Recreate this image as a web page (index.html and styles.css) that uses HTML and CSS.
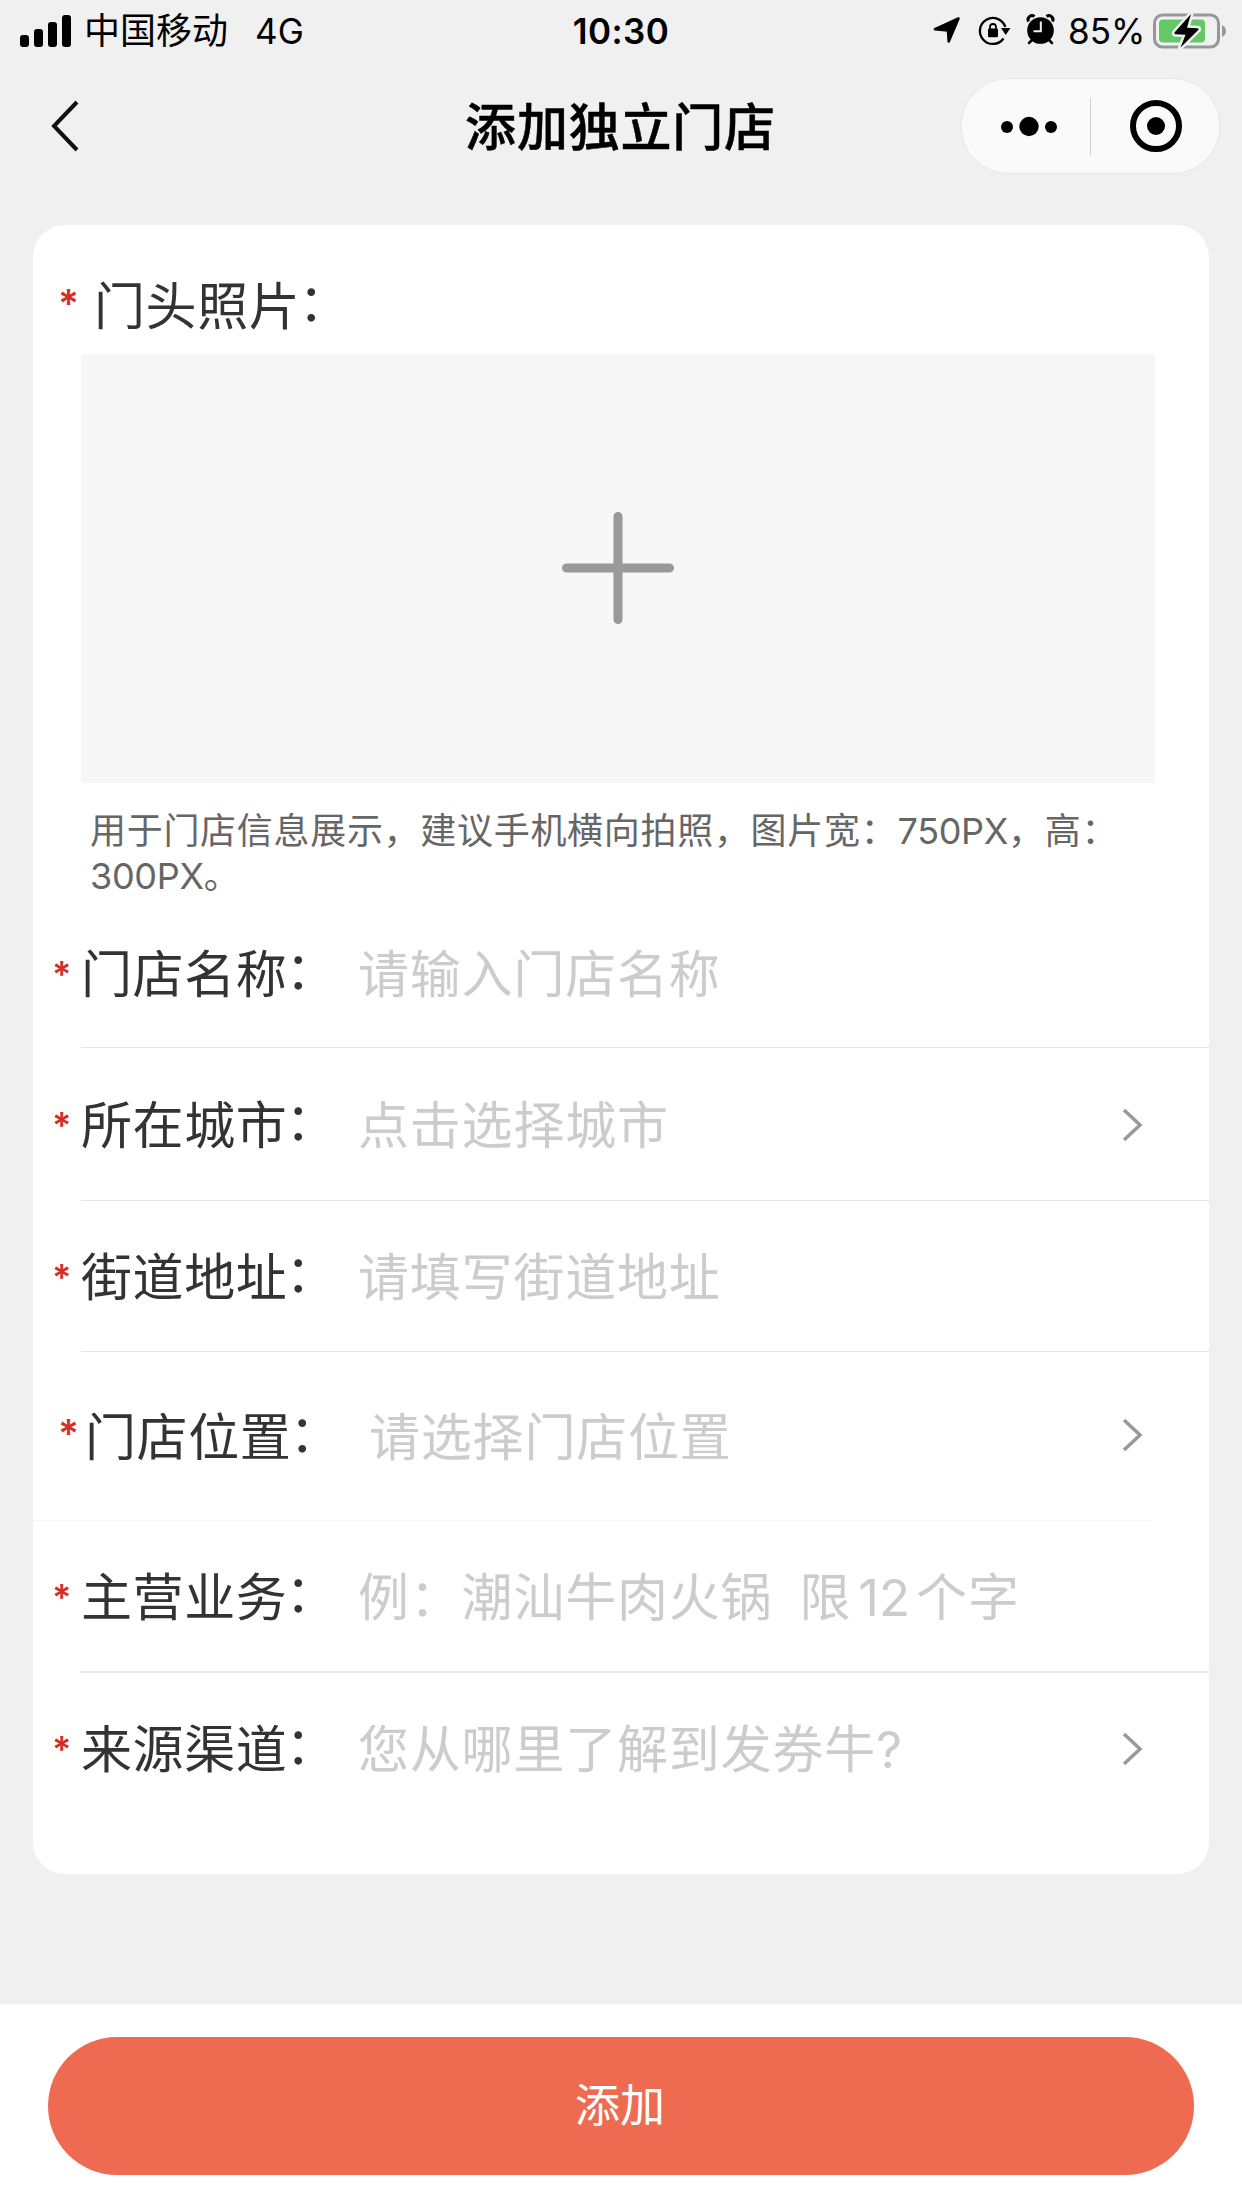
FILE: index.html
```html
<!DOCTYPE html>
<html lang="zh-CN">
<head>
<meta charset="utf-8">
<title>添加独立门店</title>
<link rel="stylesheet" href="styles.css">
</head>
<body>
<div class="page">
  <div class="status">
    <div class="status-left">
      <svg class="signal" width="52" height="32" viewBox="0 0 52 32"><rect x="0" y="20" width="9" height="12" rx="3"/><rect x="14" y="14" width="9" height="18" rx="3"/><rect x="28" y="7" width="9" height="25" rx="3"/><rect x="42" y="0" width="9" height="32" rx="3"/></svg>
      <span class="carrier">中国移动</span>
      <span class="network">4G</span>
    </div>
    <div class="clock">10:30</div>
    <div class="status-right">
      <svg width="128" height="40" viewBox="930 12 128 40">
        <path d="M958.5 19.5L935 30.2L948 31.5L948.7 42.500Z" stroke="#000" stroke-width="2.600" stroke-linejoin="round"/>
        <path d="M1005.300 28A13 13 0 1 0 1003.500 39.500" fill="none" stroke="#000" stroke-width="2.300"/>
        <path d="M1001 29H1010.500L1005.700 36Z"/>
        <rect x="988" y="29.500" width="10" height="8.800" rx="1.200"/>
        <path d="M990 30V28a3 3 0 0 1 6 0V30" fill="none" stroke="#000" stroke-width="1.800"/>
        <circle cx="1040.500" cy="31.500" r="13.300"/>
        <path d="M1028.500 22.500A4 4 0 0 1 1034.500 17.500M1046.500 17.500A4 4 0 0 1 1052.500 22.500" fill="none" stroke="#000" stroke-width="3"/>
        <path d="M1032 41L1029 44M1049 41L1052 44" stroke="#000" stroke-width="2.500" stroke-linecap="round"/>
        <path d="M1040.800 22.500V32.200H1033.500" fill="none" stroke="#f0f0f0" stroke-width="2"/>
      </svg>
      <span class="percent">85%</span>
      <svg width="74" height="40" viewBox="1152 10 74 40">
        <rect x="1154.500" y="14" width="64" height="32" rx="8" fill="none" stroke="#97979a" stroke-width="3"/>
        <rect x="1159" y="18.500" width="46" height="23" rx="4" fill="#63c967"/>
        <path d="M1222 24Q1226 26 1226 30T1222 36Z" fill="#97979a"/>
        <path d="M1191 13L1174.500 31.500Q1173.800 33 1175.500 33.300L1185.500 33.800L1180.500 46.500L1198.500 28.700Q1199 27.500 1197.500 27.200L1187 26.700Z" stroke="#f0f0f0" stroke-width="5" stroke-linejoin="round" paint-order="stroke"/>
      </svg>
    </div>
  </div>

  <div class="navbar">
    <svg class="back" width="32" height="56" viewBox="0 0 32 56"><path d="M29 4L6 28L29 52" fill="none" stroke="#111" stroke-width="4"/></svg>
    <h1 class="title">添加独立门店</h1>
    <svg class="capsule" width="262" height="98" viewBox="960 77 262 98">
      <rect x="961" y="78.500" width="259" height="95" rx="47.500" fill="#fafafa" stroke="#e6e6e6"/>
      <circle cx="1007" cy="127" r="6"/><circle cx="1029" cy="126.500" r="9.700"/><circle cx="1051" cy="127" r="6"/>
      <path d="M1090.500 98V155" stroke="#cfcfcf"/>
      <circle cx="1156" cy="126" r="23" fill="none" stroke="#000" stroke-width="6"/><circle cx="1156" cy="126" r="9"/>
    </svg>
  </div>

  <div class="card">
    <div class="photo-head"><span class="star star-large">*</span><span class="label">门头照片<i>：</i></span></div>
    <div class="upload">
      <svg width="114" height="114" viewBox="0 0 114 114"><path d="M57 5.500V108.500M5.500 57H108.500" stroke="#999" stroke-width="9" stroke-linecap="round"/></svg>
    </div>
    <p class="hint">用于门店信息展示，建议手机横向拍照，图片宽：<span class="size">750PX</span>，高：<span class="size">300PX</span>。</p>

    <div class="row row-name"><span class="star">*</span><span class="label">门店名称<i>：</i></span><span class="value">请输入门店名称</span></div>
    <div class="row row-city"><span class="star">*</span><span class="label">所在城市<i>：</i></span><span class="value">点击选择城市</span><svg class="chevron" viewBox="0 0 22 34"><path d="M2 2L18 17L2 32"/></svg></div>
    <div class="row row-street"><span class="star">*</span><span class="label">街道地址<i>：</i></span><span class="value">请填写街道地址</span></div>
    <div class="row row-place"><span class="star star-large">*</span><span class="label">门店位置<i>：</i></span><span class="value">请选择门店位置</span><svg class="chevron" viewBox="0 0 22 34"><path d="M2 2L18 17L2 32"/></svg></div>
    <div class="row row-business"><span class="star">*</span><span class="label">主营业务<i>：</i></span><span class="value">例：潮汕牛肉火锅<span class="limit">限</span><span class="count">12</span>个字</span></div>
    <div class="row row-source"><span class="star">*</span><span class="label">来源渠道<i>：</i></span><span class="value">您从哪里了解到发券牛?</span><svg class="chevron" viewBox="0 0 22 34"><path d="M2 2L18 17L2 32"/></svg></div>
  </div>

  <div class="footer"><button class="submit">添加</button></div>
</div>
</body>
</html>
```
FILE: styles.css
```css
* { box-sizing: border-box; }
body {
  margin: 0;
  background: #f0f0f0;
  color: #000;
  font-family: Inter, "Noto Sans CJK SC", sans-serif;
}
svg { display: block; flex: none; }
.page {
  width: 1242px;
  height: 2208px;
  display: flex;
  flex-direction: column;
  overflow: hidden;
}
.status {
  height: 61px;
  display: grid;
  grid-template-columns: 1fr 120px 1fr;
  align-items: center;
  padding: 0 16px 0 20px;
  font-size: 35px;
  line-height: 60px;
  white-space: nowrap;
}
.status-left, .status-right { display: flex; align-items: center; }
.status-right { justify-content: flex-end; }
.carrier { margin-left: 12px; padding-top: 1px; font-size: 36px; }
.network { margin-left: 27px; }
.clock {
  padding: 0 4px 0 0;
  text-align: center;
  font-weight: 600;
  letter-spacing: 0.4px;
}
.percent { width: 83px; margin-left: 10px; margin-right: 1px; }
.navbar {
  height: 129px;
  display: grid;
  grid-template-columns: 262px 1fr 262px;
  align-items: center;
  padding: 0 20px 0 48px;
}
.title {
  margin: 0;
  padding: 4px 29px 0 0;
  text-align: center;
  font-size: 51px;
  line-height: 72px;
  font-weight: 500;
  letter-spacing: 0.8px;
  -webkit-text-stroke: 0.5px #000;
}
.card {
  width: 1176px;
  height: 1649px;
  margin: 35px 33px 0;
  flex: none;
  border-radius: 32px;
  background: #fff;
  display: flex;
  flex-direction: column;
}
.photo-head {
  height: 129px;
  display: flex;
  align-items: center;
  padding: 32px 0 0 25px;
}
.label {
  padding-top: 2px;
  color: #333;
  font-size: 51px;
  line-height: 72px;
  letter-spacing: 0.6px;
  white-space: nowrap;
}
.label i {
  position: relative;
  top: -4px;
  left: -2px;
  font-style: normal;
}
.star {
  width: 29px;
  flex: none;
  color: #d32f2a;
  font-size: 36px;
  line-height: 40px;
  font-weight: 600;
}
.star-large { font-size: 39px; }
.photo-head .star { width: 36px; padding-bottom: 4px; }
.upload {
  width: 1074px;
  height: 429px;
  margin-left: 48px;
  padding-bottom: 2px;
  background: #f7f7f7;
  display: flex;
  align-items: center;
  justify-content: center;
}
.hint {
  width: 1040px;
  height: 116px;
  margin: 0 0 0 57px;
  padding-top: 26px;
  color: #666;
  font-size: 36px;
  line-height: 45px;
  letter-spacing: 0.7px;
}
.size { letter-spacing: -0.3px; }
.row {
  position: relative;
  display: flex;
  align-items: center;
  padding-left: 19px;
}
.row .value {
  margin-left: 19px;
  padding-top: 2px;
  flex: 1;
  color: #ccc;
  font-size: 51px;
  line-height: 72px;
  letter-spacing: 0.8px;
  white-space: nowrap;
}
.row::after {
  content: "";
  position: absolute;
  left: 48px;
  right: 0;
  bottom: 0;
  height: 1px;
  background: #e3e3e3;
}
.row-name { height: 149px; }
.row-city { height: 153px; }
.row-street { height: 151px; }
.row-place { height: 169px; padding-left: 25px; }
.row-place .value { margin-left: 26px; }
.row-place .star { width: 27px; padding-bottom: 6px; }
.row-place .chevron { margin-bottom: 4px; }
.row-place::after { left: 0; right: 57px; background: #f7f7f7; }
.row-business { height: 152px; }
.row-business::after { height: 2px; background: #e8e8e8; }
.row-source { height: 152px; }
.row-source::after { display: none; }
.limit { margin-left: 27px; }
.count { margin: 0 6px 0 7px; letter-spacing: 0; }
.chevron {
  width: 22px;
  height: 34px;
  margin-right: 65px;
  fill: none;
  stroke: #999;
  stroke-width: 3.5;
}
.footer {
  height: 204px;
  margin-top: 130px;
  padding: 33px 48px;
  background: #fff;
}
.submit {
  display: block;
  width: 1146px;
  height: 138px;
  padding: 0 2px 0 0;
  border: 0;
  border-radius: 69px;
  background: #ee6b52;
  color: #fff;
  font: 400 45px/138px Inter, "Noto Sans CJK SC", sans-serif;
}
```
